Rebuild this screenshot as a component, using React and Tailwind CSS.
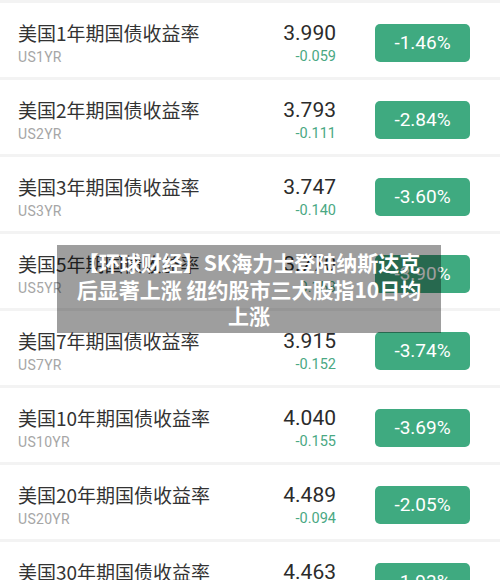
import React from "react";

const rows = [
  { name: "美国1年期国债收益率", code: "US1YR", value: "3.990", change: "-0.059", pct: "-1.46%" },
  { name: "美国2年期国债收益率", code: "US2YR", value: "3.793", change: "-0.111", pct: "-2.84%" },
  { name: "美国3年期国债收益率", code: "US3YR", value: "3.747", change: "-0.140", pct: "-3.60%" },
  { name: "美国5年期国债收益率", code: "US5YR", value: "3.770", change: "-0.153", pct: "-3.90%" },
  { name: "美国7年期国债收益率", code: "US7YR", value: "3.915", change: "-0.152", pct: "-3.74%" },
  { name: "美国10年期国债收益率", code: "US10YR", value: "4.040", change: "-0.155", pct: "-3.69%" },
  { name: "美国20年期国债收益率", code: "US20YR", value: "4.489", change: "-0.094", pct: "-2.05%" },
  { name: "美国30年期国债收益率", code: "US30YR", value: "4.463", change: "-0.091", pct: "-1.93%" },
];

const cjk = { fontFamily: '"Noto Sans CJK SC", "Noto Sans", sans-serif' };
const num = { fontFamily: 'Roboto, "Noto Sans", sans-serif' };

export default function App() {
  return (
    <div className="relative w-[500px] h-[580px] overflow-hidden bg-white">
      <div className="h-[3px] bg-[#f3f3f3]" />
      {rows.map((r) => (
        <div key={r.code}>
          <div className="h-[74px] flex items-start pl-[18px] pr-[30px]">
            <div className="flex-1 flex flex-col pt-[18px]">
              <div className="text-[19px] leading-[24px] text-[#333333]" style={cjk}>
                {r.name}
              </div>
              <div className="text-[14px] leading-[20px] mt-[2px] text-[#a6a6a6] tracking-[0.3px]" style={num}>
                {r.code}
              </div>
            </div>
            <div className="flex flex-col items-end mr-[39px] pt-[17px]">
              <div className="text-[21px] leading-[26px] text-[#2b2b2b]" style={num}>
                {r.value}
              </div>
              <div className="text-[14.5px] leading-[20px] mt-[1px] text-[#4aa883]" style={num}>
                {r.change}
              </div>
            </div>
            <div
              className="w-[95px] h-[38px] rounded-[5px] bg-[#3faa80] flex items-center justify-center text-white text-[19px] mt-[21px]"
              style={num}
            >
              {r.pct}
            </div>
          </div>
          <div className="h-[3px] bg-[#f3f3f3]" />
        </div>
      ))}
      <div className="absolute left-[57px] top-[245px] w-[384px] h-[88px] bg-[rgba(0,0,0,0.38)] flex items-center justify-center">
        <div className="text-white font-bold text-[21px] leading-[26.5px] text-center whitespace-nowrap" style={cjk}>
          【环球财经】SK海力士登陆纳斯达克
          <br />
          后显著上涨 纽约股市三大股指10日均
          <br />
          上涨
        </div>
      </div>
    </div>
  );
}
